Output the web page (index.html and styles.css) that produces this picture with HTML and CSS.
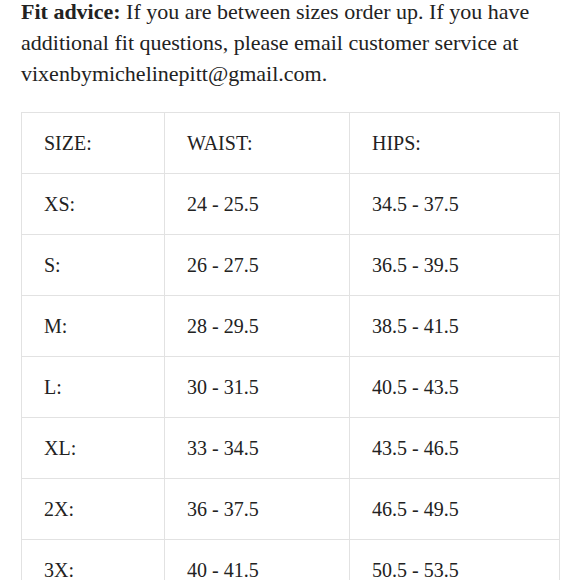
FILE: index.html
```html
<!DOCTYPE html>
<html>
<head>
<meta charset="utf-8">
<link rel="stylesheet" href="styles.css">
</head>
<body>
<div class="page">
<p class="advice"><strong>Fit advice:</strong> If you are between sizes order up. If you have additional fit questions, please email customer service at vixenbymichelinepitt@gmail.com.</p>
<table class="sizes">
<tr><td>SIZE:</td><td>WAIST:</td><td>HIPS:</td></tr>
<tr><td>XS:</td><td>24 - 25.5</td><td>34.5 - 37.5</td></tr>
<tr><td>S:</td><td>26 - 27.5</td><td>36.5 - 39.5</td></tr>
<tr><td>M:</td><td>28 - 29.5</td><td>38.5 - 41.5</td></tr>
<tr><td>L:</td><td>30 - 31.5</td><td>40.5 - 43.5</td></tr>
<tr><td>XL:</td><td>33 - 34.5</td><td>43.5 - 46.5</td></tr>
<tr><td>2X:</td><td>36 - 37.5</td><td>46.5 - 49.5</td></tr>
<tr><td>3X:</td><td>40 - 41.5</td><td>50.5 - 53.5</td></tr>
</table>
</div>
</body>
</html>
```
FILE: styles.css
```css
html, body {
  margin: 0;
  padding: 0;
  background: #fff;
}
.page {
  padding: 0 21px;
  font-family: "Liberation Serif", serif;
  color: #222;
}
.advice {
  margin: -4px 0 0;
  font-size: 22px;
  line-height: 31px;
}
.advice strong {
  font-weight: bold;
}
.sizes {
  margin-top: 23px;
  border-collapse: collapse;
  width: 539px;
  font-size: 20px;
}
.sizes td {
  border: 1px solid #e2e2e2;
  height: 60px;
  padding: 0 0 0 22px;
  vertical-align: middle;
}
.sizes td:nth-child(1) { width: 120px; }
.sizes td:nth-child(2) { width: 162px; }
```
